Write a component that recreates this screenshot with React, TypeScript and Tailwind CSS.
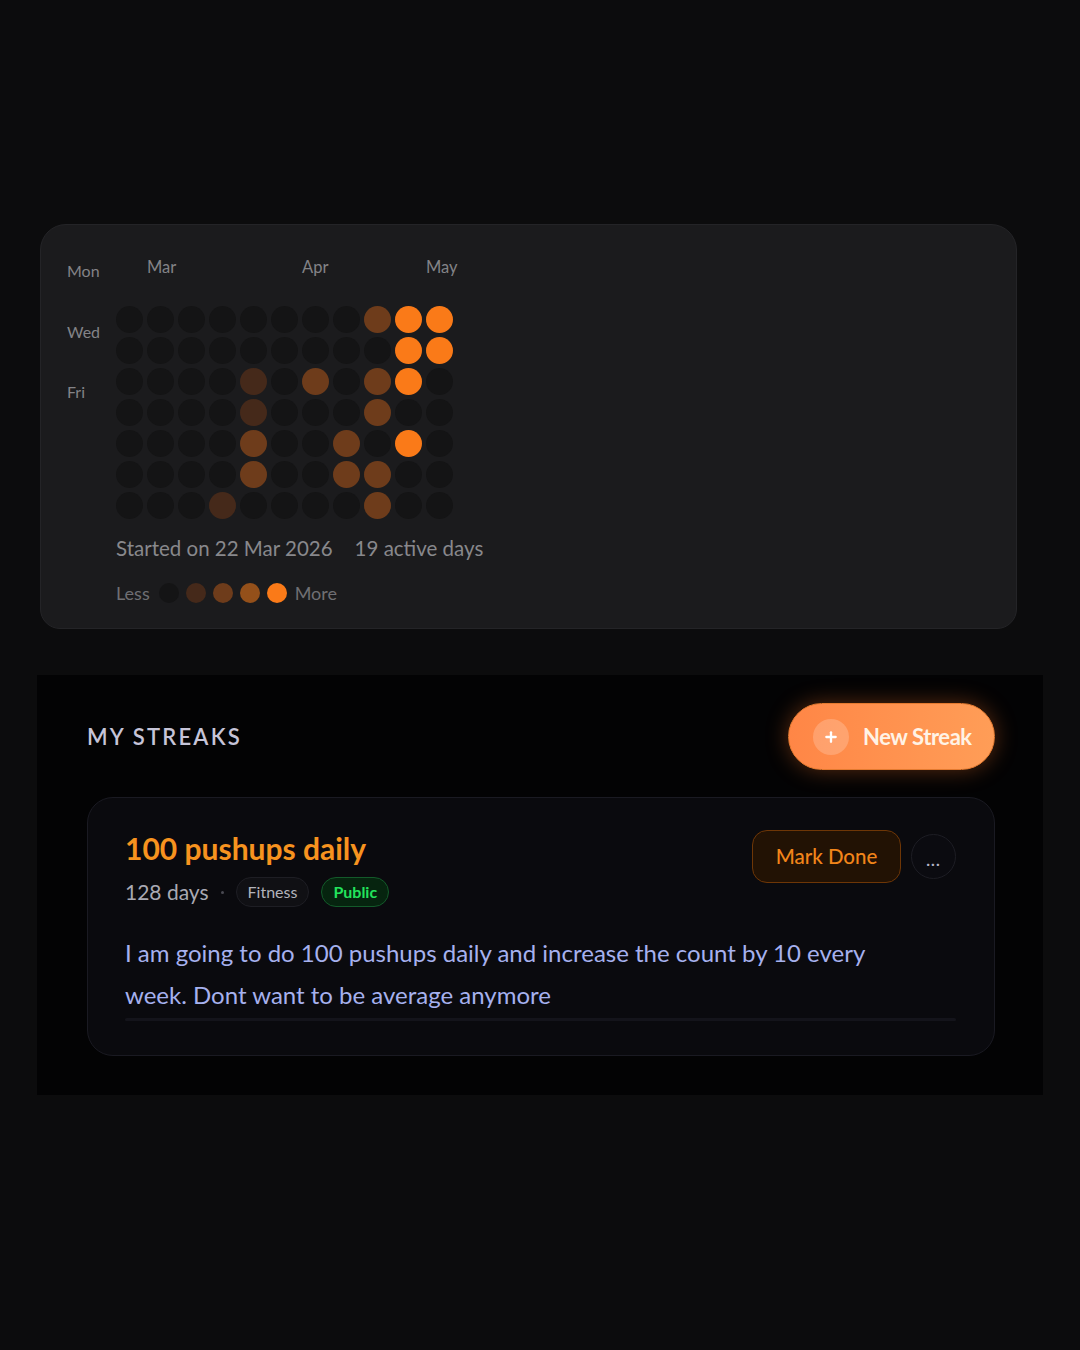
import { Plus } from "lucide-react";

type Level = 0 | 1 | 2 | 3 | 4;

const levelClass: Record<Level, string> = {
  0: "bg-[#141415]",
  1: "bg-[#45291a]",
  2: "bg-[#6e3c1b]",
  3: "bg-[#94501a]",
  4: "bg-[#fa7a18]",
};

// rows = weekdays, cols = weeks
const activity: Level[][] = [
  [0, 0, 0, 0, 0, 0, 0, 0, 2, 4, 4],
  [0, 0, 0, 0, 0, 0, 0, 0, 0, 4, 4],
  [0, 0, 0, 0, 1, 0, 2, 0, 2, 4, 0],
  [0, 0, 0, 0, 1, 0, 0, 0, 2, 0, 0],
  [0, 0, 0, 0, 2, 0, 0, 2, 0, 4, 0],
  [0, 0, 0, 0, 2, 0, 0, 2, 2, 0, 0],
  [0, 0, 0, 1, 0, 0, 0, 0, 2, 0, 0],
];

const font = { fontFamily: "Lato, 'Noto Sans', sans-serif" };

const Heatmap = () => {
  return (
    <div className="ml-[40px] w-[977px] rounded-t-[26px] rounded-b-[20px] border border-[#242427] bg-[#1b1b1d] pl-[26px] pr-6 pt-[30px] pb-[23px]">
      <div className="flex">
        <div className="flex w-[49px] flex-col pt-[4px] text-[16px] leading-6 text-[#838387]">
          <span>Mon</span>
          <span className="mt-[37px]">Wed</span>
          <span className="mt-[36px]">Fri</span>
        </div>
        <div className="flex flex-col">
          <div className="grid grid-cols-[repeat(11,27px)] gap-x-[4px] text-[16.5px] leading-6 text-[#838387]">
            <span className="col-start-2 whitespace-nowrap">Mar</span>
            <span className="col-start-7 whitespace-nowrap">Apr</span>
            <span className="col-start-11 whitespace-nowrap">May</span>
          </div>
          <div className="mt-[27px] grid grid-cols-[repeat(11,27px)] gap-[4px]">
            {activity.map((row, r) =>
              row.map((lvl, c) => (
                <div key={`${r}-${c}`} className={`h-[27px] w-[27px] rounded-full ${levelClass[lvl]}`} />
              ))
            )}
          </div>
          <div className="mt-[15px] flex items-center gap-[22px] whitespace-nowrap text-[20.5px] leading-7 text-[#88888c]">
            <span>Started on 22 Mar 2026</span>
            <span>19 active days</span>
          </div>
          <div className="mt-[19px] flex items-center text-[18px] leading-6 text-[#6f6f73]">
            <span className="mr-[9px]">Less</span>
            <div className="flex items-center gap-[7px]">
              {([0, 1, 2, 3, 4] as Level[]).map((l) => (
                <div key={l} className={`h-[20px] w-[20px] rounded-full ${levelClass[l]}`} />
              ))}
            </div>
            <span className="ml-[8px]">More</span>
          </div>
        </div>
      </div>
    </div>
  );
};

const StreakCard = () => {
  return (
    <div className="rounded-[26px] border border-[#1a1a22] bg-[#0a0a0e] pl-[37px] pr-[38px] pt-[31px] pb-[34px]">
      <div className="flex items-start justify-between">
        <div className="flex flex-col">
          <h2 className="text-[30px] font-bold leading-[38px] text-[#f7931f]">100 pushups daily</h2>
          <div className="mt-[10px] flex items-center">
            <span className="text-[21px] leading-7 text-[#a9a9b3]">128 days</span>
            <span className="mx-[12px] h-[3px] w-[3px] rounded-full bg-[#4a4a52]" />
            <span className="rounded-full border border-[#1e1e24] bg-[#101014] px-[11px] py-[4px] text-[16px] leading-5 text-[#b3b3bb]">
              Fitness
            </span>
            <span className="ml-[12px] rounded-full border border-[#135a2a] bg-[#06240f] px-[11px] py-[4px] text-[16px] font-bold leading-5 text-[#22e35c]">
              Public
            </span>
          </div>
        </div>
        <div className="mt-[1px] flex items-center gap-[10px]">
          <button
            type="button"
            className="h-[53px] w-[149px] rounded-[15px] border border-[#6e3606] bg-[#221204] text-[20.5px] font-medium text-[#f2851a]"
          >
            Mark Done
          </button>
          <button
            type="button"
            className="flex h-[45px] w-[45px] items-center justify-center rounded-full border border-[#1d1d24] bg-[#0b0b10] pt-[6px] text-[16px] font-bold tracking-[1px] text-[#b4b4c8]"
          >
            ...
          </button>
        </div>
      </div>
      <p className="mt-[25px] max-w-[790px] text-[24px] leading-[42px] text-[#a6b1ee]">
        I am going to do 100 pushups daily and increase the count by 10 every week. Dont want to be average anymore
      </p>
      <div className="mt-[2px] h-[3px] w-full rounded-full bg-[#14141b]" />
    </div>
  );
};

const StreaksSection = () => {
  return (
    <section className="ml-[37px] mt-[46px] w-[1006px] bg-[#030304] pl-[50px] pr-[48px] pt-[28px] pb-[39px]">
      <div className="flex items-center justify-between">
        <h1 className="text-[22px] font-semibold tracking-[0.1em] text-[#c6c4d8]">MY STREAKS</h1>
        <button
          type="button"
          className="flex h-[67px] w-[207px] items-center gap-[14px] rounded-full border border-[#e47a30] bg-gradient-to-r from-[#ff8646] to-[#ff9d57] pl-[24px] shadow-[0_0_22px_rgba(255,120,40,0.35)]"
        >
          <span className="flex h-[36px] w-[36px] items-center justify-center rounded-full bg-white/20">
            <Plus className="h-[16px] w-[16px] text-white" strokeWidth={3.5} />
          </span>
          <span className="text-[22px] font-bold tracking-[-0.02em] text-[#fff3e6]">New Streak</span>
        </button>
      </div>
      <div className="mt-[27px]">
        <StreakCard />
      </div>
    </section>
  );
};

export default function App() {
  return (
    <div className="min-h-[1350px] bg-[#0c0c0d] pt-[224px]" style={font}>
      <Heatmap />
      <StreaksSection />
    </div>
  );
}
